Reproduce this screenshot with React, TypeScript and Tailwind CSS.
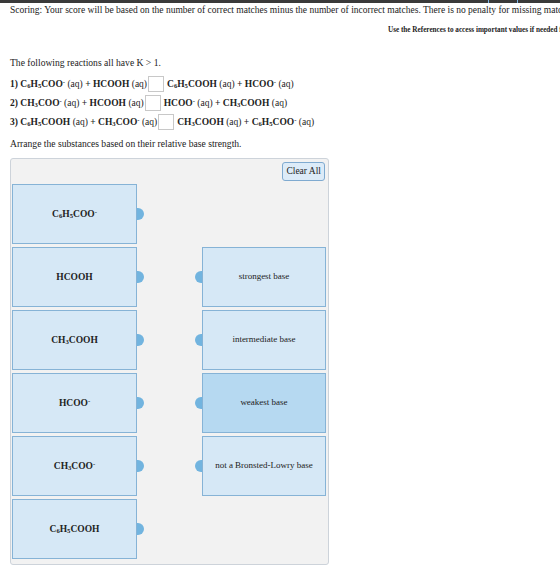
import React from "react";

const serif = { fontFamily: '"Liberation Serif", "Times New Roman", serif' };

function Sub({ children }: { children: React.ReactNode }) {
  return <sub className="text-[0.7em] leading-none relative top-[1px]">{children}</sub>;
}
function Sup({ children }: { children: React.ReactNode }) {
  return <sup className="text-[0.7em] leading-none">{children}</sup>;
}

const C6H5COO = (
  <>
    C<Sub>6</Sub>H<Sub>5</Sub>COO<Sup>-</Sup>
  </>
);
const C6H5COOH = (
  <>
    C<Sub>6</Sub>H<Sub>5</Sub>COOH
  </>
);
const CH3COO = (
  <>
    CH<Sub>3</Sub>COO<Sup>-</Sup>
  </>
);
const CH3COOH = (
  <>
    CH<Sub>3</Sub>COOH
  </>
);
const HCOO = (
  <>
    HCOO<Sup>-</Sup>
  </>
);

function Blank() {
  return <span className="inline-block w-[16px] h-[16px] border border-[#c8c8c8] bg-white ml-[1px] mr-[3px] align-[-2px]" />;
}

function LeftCard({ children }: { children: React.ReactNode }) {
  return (
    <div className="relative h-[60px] w-[125px] bg-[#d6e8f6] border border-[#86b3d6] flex items-center justify-center text-[9.5px] font-bold text-[#222]">
      <span>{children}</span>
      <span className="absolute right-[-8px] top-1/2 -translate-y-1/2 w-[7px] h-[12px] rounded-r-full bg-[#72b4df]" />
    </div>
  );
}

function RightCard({ children, active }: { children: React.ReactNode; active?: boolean }) {
  return (
    <div
      className={`relative h-[60px] w-[124px] border border-[#86b3d6] flex items-center justify-center text-[9px] text-[#222] ${
        active ? "bg-[#b6d9f1]" : "bg-[#d6e8f6]"
      }`}
    >
      <span>{children}</span>
      <span className="absolute left-[-8px] top-1/2 -translate-y-1/2 w-[7px] h-[12px] rounded-l-full bg-[#72b4df]" />
    </div>
  );
}

export default function App() {
  return (
    <div className="w-[560px] h-[576px] bg-white overflow-hidden text-[#222]" style={serif}>
      <div className="h-[3px] bg-[#3a3a3a] relative">
        <span className="absolute left-[488px] top-0 w-[30px] h-[3px] border-x border-[#7fb7e6]" />
      </div>
      <div className="pl-[10px] whitespace-nowrap text-[9.5px] leading-[14px]">
        Scoring: Your score will be based on the number of correct matches minus the number of incorrect matches. There is
        no penalty for missing matches.
      </div>
      <div className="pl-[388px] pt-[8px] whitespace-nowrap text-[7.2px] leading-[11px] font-bold">
        Use the References to access important values if needed for this question.
      </div>
      <div className="pl-[10px] pt-[20px] text-[9.6px] leading-[14px]">The following reactions all have K &gt; 1.</div>

      <div className="pl-[10px] pt-[6px] flex flex-col gap-[3px] text-[9.5px] leading-[14px] font-bold">
        <div className="flex items-center h-[16px] whitespace-nowrap">
          <span>1) {C6H5COO} <span className="font-normal">(aq)</span> + HCOOH <span className="font-normal">(aq)</span></span>
          <Blank />
          <span>{C6H5COOH} <span className="font-normal">(aq)</span> + {HCOO} <span className="font-normal">(aq)</span></span>
        </div>
        <div className="flex items-center h-[16px] whitespace-nowrap">
          <span>2) {CH3COO} <span className="font-normal">(aq)</span> + HCOOH <span className="font-normal">(aq)</span></span>
          <Blank />
          <span>{HCOO} <span className="font-normal">(aq)</span> + {CH3COOH} <span className="font-normal">(aq)</span></span>
        </div>
        <div className="flex items-center h-[16px] whitespace-nowrap">
          <span>3) {C6H5COOH} <span className="font-normal">(aq)</span> + {CH3COO} <span className="font-normal">(aq)</span></span>
          <Blank />
          <span>{CH3COOH} <span className="font-normal">(aq)</span> + {C6H5COO} <span className="font-normal">(aq)</span></span>
        </div>
      </div>

      <div className="pl-[10px] pt-[7px] text-[9.6px] leading-[14px]">Arrange the substances based on their relative base strength.</div>

      <div className="ml-[10px] mt-[7px] w-[319px] h-[407px] bg-[#f2f2f2] border border-[#cdd3da] rounded-[3px] px-[1px] pt-[3px]">
        <div className="flex justify-end pr-[2px]">
          <button className="h-[19px] px-[3px] text-[9.5px] bg-[#dcebf8] border border-[#7faad0] rounded-[3px] leading-none">
            Clear All
          </button>
        </div>
        <div className="flex mt-[3px] justify-between pr-[1px]">
          <div className="flex flex-col gap-[3px]">
            <LeftCard>{C6H5COO}</LeftCard>
            <LeftCard>HCOOH</LeftCard>
            <LeftCard>{CH3COOH}</LeftCard>
            <LeftCard>{HCOO}</LeftCard>
            <LeftCard>{CH3COO}</LeftCard>
            <LeftCard>{C6H5COOH}</LeftCard>
          </div>
          <div className="flex flex-col gap-[3px] pt-[63px]">
            <RightCard>strongest base</RightCard>
            <RightCard>intermediate base</RightCard>
            <RightCard active>weakest base</RightCard>
            <RightCard>not a Bronsted-Lowry base</RightCard>
          </div>
        </div>
      </div>
    </div>
  );
}
